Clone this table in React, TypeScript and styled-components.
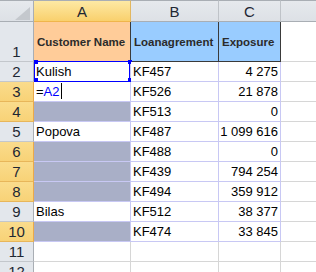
import React from "react";
import styled, { createGlobalStyle, css } from "styled-components";

const Global = createGlobalStyle`
  html, body { margin: 0; padding: 0; background: #ffffff; }
  body { font-family: "Liberation Sans", Arial, sans-serif; }
`;

const Viewport = styled.div`
  width: 316px;
  height: 272px;
  overflow: hidden;
  background: #ffffff;
`;

const Sheet = styled.div`
  display: grid;
  grid-template-columns: 34px 97px 88px 62px 64px;
  grid-template-rows: 22px 40px repeat(11, 20px);
  width: max-content;
`;

const headerText = css`
  font-family: "Liberation Sans", Arial, sans-serif;
  font-size: 15px;
  color: #1e2733;
`;

const Corner = styled.div`
  position: relative;
  box-sizing: border-box;
  border-top: 1px solid #a9aeb4;
  border-right: 1px solid #a9aeb4;
  border-bottom: 1px solid #a9aeb4;
  background: linear-gradient(#e6e9ed, #dde1e6);
`;

const CornerMark = styled.svg`
  position: absolute;
  right: 3px;
  bottom: 1px;
`;

const ColHeader = styled.div<{ $selected?: boolean }>`
  ${headerText};
  box-sizing: border-box;
  display: flex;
  align-items: center;
  justify-content: center;
  border-top: 1px solid #a9aeb4;
  border-right: 1px solid ${(p) => (p.$selected ? "#e2b760" : "#bfc3c8")};
  border-bottom: 1px solid ${(p) => (p.$selected ? "#f0b54c" : "#a9aeb4")};
  background: ${(p) =>
    p.$selected
      ? "linear-gradient(#fde9a4, #f9d06d)"
      : "linear-gradient(#e6e9ed, #dde1e6)"};
  padding-top: 1px;
`;

const RowHeader = styled.div<{ $selected?: boolean }>`
  ${headerText};
  box-sizing: border-box;
  display: flex;
  align-items: flex-end;
  justify-content: center;
  padding-bottom: 1px;
  line-height: 17px;
  border-right: 1px solid ${(p) => (p.$selected ? "#eaa94a" : "#a9aeb4")};
  border-bottom: 1px solid ${(p) => (p.$selected ? "#e8b65a" : "#c3c7cc")};
  background: ${(p) =>
    p.$selected ? "linear-gradient(#fadc8c, #f8d277)" : "#e3e7ec"};
`;

const TitleCell = styled.div<{ $bg: string }>`
  box-sizing: border-box;
  display: flex;
  align-items: center;
  padding: 0 3px;
  background: ${(p) => p.$bg};
  border-right: 1px solid #3a3a3a;
  border-bottom: 1px solid #3a3a3a;
  font-size: 11.5px;
  font-weight: 700;
  color: #2b2b2b;
  white-space: nowrap;
  overflow: hidden;
`;

const BlankCell = styled.div`
  box-sizing: border-box;
  border-right: 1px solid #d6d6d6;
  border-bottom: 1px solid #d6d6d6;
  background: #ffffff;
`;

const Cell = styled.div<{ $shaded?: boolean; $right?: boolean }>`
  position: relative;
  box-sizing: border-box;
  display: flex;
  align-items: flex-end;
  justify-content: ${(p) => (p.$right ? "flex-end" : "flex-start")};
  padding: 0 2px 2px 2px;
  line-height: 15px;
  font-size: 13px;
  color: #000000;
  white-space: nowrap;
  background: ${(p) => (p.$shaded ? "#a9afc7" : "#ffffff")};
  border-right: 1px solid #c8c8f4;
  border-bottom: 1px solid #c8c8f4;
`;

const RefBox = styled.div`
  position: absolute;
  left: 0;
  top: -1px;
  width: 96px;
  height: 21px;
  box-sizing: border-box;
  border: 1px solid #0000ff;
  pointer-events: none;
`;

const Handle = styled.span<{ $x: number; $y: number }>`
  position: absolute;
  width: 4px;
  height: 4px;
  background: #0000ff;
  left: ${(p) => p.$x}px;
  top: ${(p) => p.$y}px;
`;

const Ref = styled.span`
  color: #0000ff;
`;

const Caret = styled.span`
  display: inline-block;
  width: 1px;
  height: 16px;
  margin-left: 1px;
  background: #000000;
  vertical-align: -3px;
`;

type Row = {
  n: number;
  a?: string;
  b: string;
  c: string;
  shaded?: boolean;
  selected?: boolean;
  formula?: boolean;
  ref?: boolean;
};

const rows: Row[] = [
  { n: 2, a: "Kulish", b: "KF457", c: "4 275", ref: true },
  { n: 3, b: "KF526", c: "21 878", selected: true, formula: true },
  { n: 4, b: "KF513", c: "0", selected: true, shaded: true },
  { n: 5, a: "Popova", b: "KF487", c: "1 099 616" },
  { n: 6, b: "KF488", c: "0", selected: true, shaded: true },
  { n: 7, b: "KF439", c: "794 254", selected: true, shaded: true },
  { n: 8, b: "KF494", c: "359 912", selected: true, shaded: true },
  { n: 9, a: "Bilas", b: "KF512", c: "38 377" },
  { n: 10, b: "KF474", c: "33 845", selected: true, shaded: true },
];

export default function App() {
  return (
    <Viewport>
      <Global />
      <Sheet>
        <Corner>
          <CornerMark width="15" height="13" viewBox="0 0 15 13">
            <polygon points="15,0 15,13 0,13" fill="#c4c8cd" />
          </CornerMark>
        </Corner>
        <ColHeader $selected>A</ColHeader>
        <ColHeader>B</ColHeader>
        <ColHeader>C</ColHeader>
        <ColHeader />

        <RowHeader>1</RowHeader>
        <TitleCell $bg="#ffcc99">Customer Name</TitleCell>
        <TitleCell $bg="#99ccff">Loanagrement</TitleCell>
        <TitleCell $bg="#99ccff">Exposure</TitleCell>
        <BlankCell />

        {rows.map((r) => (
          <React.Fragment key={r.n}>
            <RowHeader $selected={r.selected}>{r.n}</RowHeader>
            <Cell $shaded={r.shaded}>
              {r.formula ? (
                <span>
                  =<Ref>A2</Ref>
                  <Caret />
                </span>
              ) : (
                r.a
              )}
              {r.ref && (
                <RefBox>
                  <Handle $x={-1} $y={-2} />
                  <Handle $x={93} $y={-2} />
                  <Handle $x={-1} $y={16} />
                  <Handle $x={93} $y={16} />
                </RefBox>
              )}
            </Cell>
            <Cell>{r.b}</Cell>
            <Cell $right>{r.c}</Cell>
            <BlankCell />
          </React.Fragment>
        ))}

        {[11, 12].map((n) => (
          <React.Fragment key={n}>
            <RowHeader>{n}</RowHeader>
            <BlankCell />
            <BlankCell />
            <BlankCell />
            <BlankCell />
          </React.Fragment>
        ))}
      </Sheet>
    </Viewport>
  );
}
